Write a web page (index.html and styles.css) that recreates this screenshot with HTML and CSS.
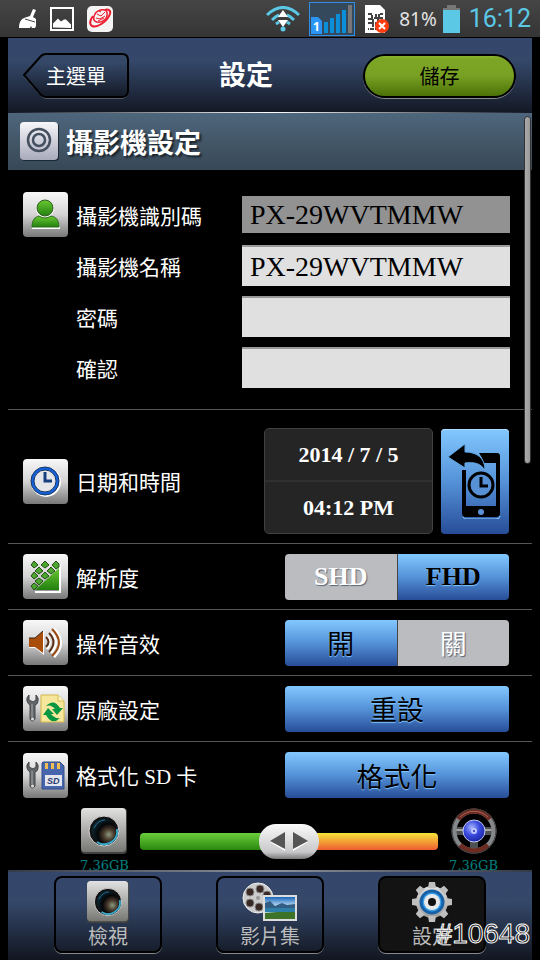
FILE: index.html
```
<!DOCTYPE html>
<html lang="zh-Hant">
<head>
<meta charset="UTF-8" />
<meta name="viewport" content="width=device-width, initial-scale=1.0" />
<title>設定</title>
<link rel="stylesheet" href="styles.css">
</head>
<body>

<div class="statusbar">
    <div class="status-group notices">
        <svg width="18" height="20" viewBox="0 0 18 20"><path d="M14 0l3 1-3 7 3 2v7l-1 2h-3l-1-2-1 2H0c0-7 3-10 8-11l3-1z" fill="#fff"/><path d="M6 10l10 3" stroke="#444" stroke-width="1"/></svg>
        <svg width="24" height="24" viewBox="0 0 24 24"><rect x="1" y="1" width="22" height="22" fill="none" stroke="#fff" stroke-width="2"/><path d="M3 20.500v-4l5-5 3 3 3-2 2 0 5 5v3.500z" fill="#fff"/></svg>
        <svg width="26" height="26" viewBox="0 0 26 26"><rect width="26" height="26" rx="5" fill="#f4f4f4"/><g fill="none" stroke="#ed1c2e"><path d="M6 10C3 14 2 18 5 20c5 2 15-4 18-12 1-4-2-5-5-4" stroke-width="2"/><path d="M8 8c3-5 12-6 12-1 1 5-4 10-10 9-4-1-4-4-2-8z" stroke-width="1.500"/><path d="M10 8l4 2 4-4M9 12l4 1 5-3M12 5l2 1M11 15l6-3" stroke-width="1"/></g></svg>
    </div>
    <div class="status-group network">
        <svg width="34" height="26" viewBox="0 0 34 26"><g fill="none" stroke="#5bc8e6" stroke-width="3"><path d="M1 9Q17-6 33 9"/><path d="M6 14Q10 10 13 9M28 14Q24 10 21 9"/><path d="M10 18l3-2M24 18l-3-2"/></g><path d="M17 4l5 7H12zM17 21l-5-7h10z" fill="#fff"/><circle cx="17" cy="23" r="2.500" fill="#5bc8e6"/></svg>
        <svg width="46" height="34" viewBox="0 0 46 34"><rect x=".5" y=".5" width="45" height="33" fill="#34495b" stroke="#2f8fe8"/><path d="M2 15h7l4 4v13H2z" fill="#2b95f5"/><text x="4" y="29" class="sim-number">1</text><path d="M15 20h4v11h-4zM21 16h4v15h-4zM27 12h4v19h-4zM33 8h4v23h-4z" fill="#0a8fd8"/><path d="M39 3h4v28h-4z" fill="#777"/></svg>
        <svg width="26" height="30" viewBox="0 0 26 30"><path d="M1 1h15l5 5v23H1z" fill="#fff"/><path d="M4 10h4v4h7v-4h4M4 15h5v4M19 14h-5v5M4 19h5v6H4M12 14v-4M12 18v8" fill="none" stroke="#444" stroke-width="2" stroke-dasharray="4 1"/><circle cx="18" cy="22" r="7" fill="#ff3d10"/><path d="M15 19l6 6M21 19l-6 6" stroke="#fff" stroke-width="2"/></svg>
        <div class="battery">
            <span>81%</span>
            <svg width="17" height="28" viewBox="0 0 17 28"><path d="M4 0h9v3h4v3H0V3h4z" fill="#777"/><path d="M0 5h17v23H0z" fill="#5bc8e6"/></svg>
        </div>
        <span class="clock">16:12</span>
    </div>
</div>

<div class="app">
    <header class="topbar">
        <button class="back-btn" type="button">
            <svg class="back-shape" width="106" height="46" viewBox="0 0 106 46">
                <defs><linearGradient id="bar" x2="0" y2="1"><stop offset=".2" stop-color="#354868"/><stop offset="1" stop-color="#131925"/></linearGradient></defs>
                <path d="M1 23L18 4Q20 2 23 2h76q6 0 6 6v31q0 6-6 6H23q-3 0-5-2z" fill="none" stroke="#8b8d93"/>
                <path d="M1 22L18 3Q20 1 23 1h76q6 0 6 6v31q0 6-6 6H23q-3 0-5-2z" fill="url(#bar)" stroke="#000" stroke-width="2"/>
            </svg>
            <span>主選單</span>
        </button>
        <h1>設定</h1>
        <button class="save-btn" type="button">儲存</button>
    </header>

    <main class="content">
        <div class="section-head">
            <svg width="39" height="39" viewBox="0 0 39 39"><defs><linearGradient id="silver" x2="0" y2="1"><stop offset="0" stop-color="#f7f7fa"/><stop offset="1" stop-color="#a9aabb"/></linearGradient></defs><rect x="1" y="1" width="38" height="38" rx="4" fill="#1d2933"/><rect width="38" height="38" rx="4" fill="url(#silver)"/><g fill="none" stroke="#44505f" stroke-width="3"><circle cx="19" cy="18" r="11" stroke-width="2.500"/><circle cx="19" cy="18" r="6" stroke-width="2.500"/></g></svg>
            <h2>攝影機設定</h2>
        </div>

        <form class="settings">
            <div class="camera-fields">
                <span class="tile"><svg width="45" height="45" viewBox="0 0 45 45"><defs><linearGradient id="green" x2="0" y2="1"><stop offset="0" stop-color="#69c832"/><stop offset="1" stop-color="#238010"/></linearGradient></defs><g transform="translate(0 1)" fill="#fff"><circle cx="22" cy="16" r="9"/><path d="M9 36c0-8 4-12 7-12q6 4 12 0c5 2 9 5 9 12z"/></g><circle cx="22" cy="16" r="8" fill="url(#green)" stroke="#315d23"/><path d="M9 35c0-7 3-10 7-11q6 4 12 0c5 1 8 4 8 11z" fill="url(#green)" stroke="#2a6b1a"/></svg></span>
                <label for="camId">攝影機識別碼</label>
                <input class="field readonly" id="camId" type="text" value="PX-29WVTMMW" readonly>
                <label for="camName">攝影機名稱</label>
                <input class="field" id="camName" type="text" value="PX-29WVTMMW">
                <label for="pass">密碼</label>
                <input class="field" id="pass" type="password">
                <label for="confirm">確認</label>
                <input class="field" id="confirm" type="password">
            </div>

            <div class="row date-row">
                <span class="tile"><svg width="45" height="45" viewBox="0 0 45 45"><circle cx="23" cy="23" r="14" fill="none" stroke="#fff" stroke-width="2"/><circle cx="22" cy="22" r="12.500" fill="#e4e6ea" stroke="#1263dc" stroke-width="3"/><circle cx="22" cy="22" r="14" fill="none" stroke="#193461"/><circle cx="22" cy="22" r="11" fill="none" stroke="#193461"/><path d="M22 13v9h7" fill="none" stroke="#163f80" stroke-width="3"/></svg></span>
                <span class="label">日期和時間</span>
                <div class="datetime">
                    <button type="button">2014 / 7 / 5</button>
                    <button type="button">04:12 PM</button>
                </div>
                <button class="blue sync-btn" type="button" aria-label="同步時間">
                    <svg width="54" height="76" viewBox="0 0 54 76">
                        <path d="M15 74q1 2 3 2h30q4 0 4-3" fill="none" stroke="#8fd0ff" stroke-width="1"/>
                        <path d="M31 10h18q3 0 3 3v57q0 4-4 4H18q-4 0-4-4V27h4v36h30V20H36q-2-6-5-10z" fill="#000"/>
                        <path d="M0 14L17 1v8c12 0 20 6 20 18-5-7-11-8-20-7v5z" fill="#000" stroke="#62a9e8" stroke-width="1"/>
                        <circle cx="33" cy="42" r="12" fill="#5790d5" stroke="#000" stroke-width="3"/>
                        <path d="M33 34v9h7" fill="none" stroke="#000" stroke-width="3"/>
                        <circle cx="33" cy="69" r="3" fill="#5d92d6"/>
                    </svg>
                </button>
            </div>

            <div class="row">
                <span class="tile"><svg width="45" height="45" viewBox="0 0 45 45"><path d="M37 10v28H12" fill="none" stroke="#fff" stroke-width="2"/><path d="M36 14v22H12z" fill="url(#green)"/><g fill="#4ba52f" stroke="#234f17" stroke-width="1"><path d="M11 7l4 4-4 3-3-3zM22 7l4 4-4 3-4-3zM33 7l3 3v3l-3 2-4-4zM16 13l4 4-4 3-4-3zM28 13l4 4-4 3-4-3zM11 18l4 4-4 3-3-3zM22 18l4 4-4 3-4-3zM16 24l4 3-4 4-4-4zM11 29l4 3-4 4-3-4z"/></g></svg></span>
                <span class="label">解析度</span>
                <div class="control toggle latin">
                    <button class="off" type="button">SHD</button>
                    <button class="blue" type="button">FHD</button>
                </div>
            </div>

            <div class="row">
                <span class="tile"><svg width="45" height="45" viewBox="0 0 45 45"><path d="M6 19h6l9-8v24l-9-7H6z" fill="#fff"/><path d="M6 18h6l8-7v22l-8-6H6z" fill="#a84d0a"/><path d="M6 18h6l8-7" fill="none" stroke="#3d2411"/><g fill="none" stroke="#fff" stroke-width="3"><path d="M24 17q5 5 0 12M28 13q9 9 0 20M31 9q13 14 0 28"/></g><g fill="none" stroke="#5b3015" stroke-width="2"><path d="M23 17q5 5 0 10M26 13q9 9 0 19"/><path d="M29 9q14 14 0 27" stroke="#9a480d"/></g></svg></span>
                <span class="label">操作音效</span>
                <div class="control toggle">
                    <button class="blue" type="button">開</button>
                    <button class="off" type="button">關</button>
                </div>
            </div>

            <div class="row">
                <span class="tile"><svg width="45" height="45" viewBox="0 0 45 45"><defs><g id="wrench"><path d="M6 9q-3 3-2 6 1 3 3 4v14q2 4 5 0V19q3-1 3-4 1-3-2-6v5l-3 2-4-2z" fill="#62676b" stroke="#444" stroke-width="1"/><path d="M9 18v13" stroke="#a5a9ab"/><circle cx="9.500" cy="33" r="1.500" fill="#ddd"/></g></defs><use href="#wrench"/><path d="M18 9h17l6 6v21H18z" fill="#f6e79c" stroke="#d5b94d"/><path d="M35 9v6h6" fill="#fff6cc" stroke="#d5b94d"/><g fill="#079641"><path d="M23 20q8-8 14 2l3 0-6 7-5-6 3 0q-4-5-9-3z"/><path d="M37 32q-8 8-14-3l-3 0 5-7 6 6-3 0q4 5 9 4z"/></g></svg></span>
                <span class="label">原廠設定</span>
                <button class="control blue" type="button">重設</button>
            </div>

            <div class="row last">
                <span class="tile"><svg width="45" height="45" viewBox="0 0 45 45"><use href="#wrench"/><path d="M20 9h17l4 4v23H19V10z" fill="#4766ae" stroke="#354c8a"/><path d="M22 10h3v6h-3zM28 10h3v6h-3zM34 10h3v6h-3z" fill="#f3bd50"/><rect x="22" y="22" width="17" height="11" fill="#e3e6ee"/><text x="24" y="31" class="sd-mark">SD</text></svg></span>
                <span class="label">格式化 SD 卡</span>
                <button class="control blue" type="button">格式化</button>
            </div>

            <div class="storage">
                <div class="storage-end">
                    <svg width="46" height="46" viewBox="0 0 46 46">
                        <defs>
                            <linearGradient id="body" x2="0" y2="1"><stop offset="0" stop-color="#e2e2e2"/><stop offset="1" stop-color="#777873"/></linearGradient>
                            <radialGradient id="lens" cx=".7" cy=".65" r=".75"><stop offset="0" stop-color="#8a9a80"/><stop offset=".3" stop-color="#4a3a2c"/><stop offset=".6" stop-color="#050608"/><stop offset="1" stop-color="#0c2c38"/></radialGradient>
                            <g id="camera"><rect width="46" height="46" rx="4" fill="#41423f"/><rect width="45" height="44" rx="4" fill="url(#body)"/><circle cx="23" cy="23" r="15" fill="#111" stroke="#d5d5d5"/><circle cx="23" cy="23" r="12" fill="url(#lens)"/><path d="M16 34a13 13 0 0 0 20-13" fill="none" stroke="#3aa9ca" stroke-width="2"/><path d="M13 20q4-8 11-8" fill="none" stroke="#216a95" stroke-width="1"/></g>
                        </defs>
                        <use href="#camera"/>
                    </svg>
                    <span>7.36GB</span>
                </div>
                <input class="split" type="range" min="0" max="100" value="50" aria-label="儲存空間分配">
                <div class="storage-end">
                    <svg width="46" height="46" viewBox="0 0 46 46">
                        <defs><radialGradient id="hub" cx=".4" cy=".35" r=".7"><stop offset="0" stop-color="#a7b6ff"/><stop offset=".5" stop-color="#3949dc"/><stop offset="1" stop-color="#1721a0"/></radialGradient></defs>
                        <path d="M4 23h38M23 23v18" stroke="#4e5052" stroke-width="8"/>
                        <path d="M4 22h38" stroke="#a1a3a4" stroke-width="2"/>
                        <g fill="none" stroke-width="5"><circle cx="23" cy="23" r="20" stroke="#85888a"/><path d="M7 11a20 20 0 0 1 32 0M9 37a20 20 0 0 0 28 0" stroke="#6e2b22"/></g>
                        <circle cx="23" cy="23" r="22" fill="none" stroke="#3c3938"/>
                        <path d="M9 9a20 20 0 0 1 28 0" fill="none" stroke="#aa6255"/>
                        <circle cx="23" cy="23" r="11" fill="url(#hub)" stroke="#c3c9ef"/><circle cx="23" cy="23" r="3" fill="#bec8ff"/><circle cx="23" cy="23" r="1" fill="#2632a5"/>
                    </svg>
                    <span>7.36GB</span>
                </div>
            </div>
        </form>
        <div class="scrollbar"></div>
    </main>

    <nav class="tabbar">
        <button class="tab" type="button">
            <svg width="42" height="42" viewBox="0 0 46 46"><use href="#camera"/></svg>
            <span>檢視</span>
        </button>
        <button class="tab" type="button">
            <svg width="56" height="42" viewBox="0 0 56 42">
                <defs><linearGradient id="sky" x2="0" y2="1"><stop offset="0" stop-color="#1865bb"/><stop offset=".4" stop-color="#bcdcf2"/></linearGradient></defs>
                <circle cx="16" cy="17" r="15" fill="#ccc" stroke="#eee"/>
                <g fill="#382925" stroke="#888"><circle cx="18" cy="8" r="4"/><circle cx="8" cy="11" r="4"/><circle cx="8" cy="22" r="4"/><circle cx="17" cy="26" r="4"/><circle cx="25" cy="14" r="4"/></g>
                <circle cx="16" cy="17" r="2" fill="#999"/>
                <rect x="21" y="14" width="34" height="26" fill="#ddd"/>
                <path d="M23 16h30v22H23z" fill="url(#sky)"/><path d="M23 22l5-2 5 5 7-3 5 2 8-1v6H23z" fill="#335e83"/><path d="M23 27h30v4H23z" fill="#2d7fa9"/><path d="M23 32l12-1 18 0v7H23z" fill="#3c7328"/>
            </svg>
            <span>影片集</span>
        </button>
        <button class="tab active" type="button">
            <svg width="42" height="42" viewBox="0 0 42 42">
                <defs><linearGradient id="steel" x2="0" y2="1"><stop offset="0" stop-color="#e0e0e0"/><stop offset="1" stop-color="#9c9c9c"/></linearGradient></defs>
                <g fill="#bfbfbf"><circle cx="21" cy="21" r="16" fill="url(#steel)"/><path id="teeth" d="M18 1h6l1 6h-8zM18 41h6l1-6h-8zM1 18v6l6 1v-8zM41 18v6l-6 1v-8z"/><use href="#teeth" transform="rotate(45 21 21)"/></g>
                <circle cx="21" cy="21" r="11" fill="#3aa0ec" stroke="#1760a5" stroke-width="3"/><circle cx="21" cy="21" r="8" fill="#e9e9e9"/><circle cx="21" cy="21" r="4" fill="#111"/>
            </svg>
            <span>設定</span>
        </button>
    </nav>
</div>

<div class="stamp">#10648</div>

</body>
</html>
```
FILE: styles.css
```
* {
    box-sizing: border-box;
}
body {
    margin: 0;
    height: 100vh;
    display: flex;
    flex-direction: column;
    position: relative;
    background: #000;
    color: #fff;
    font-family: "Liberation Serif", "Noto Sans CJK TC", serif;
    font-size: 21px;
    overflow: hidden;
}
button {
    border: 0;
    padding: 0;
    background: none;
    color: inherit;
    font: inherit;
    cursor: pointer;
}
h1, h2 {
    margin: 0;
    font-size: 27px;
    line-height: 36px;
    font-weight: bold;
}
svg {
    display: block;
    flex-shrink: 0;
}

/* phone status bar */
.statusbar {
    height: 37px;
    display: flex;
    justify-content: space-between;
    padding: 0 9px 0 19px;
    background: linear-gradient(#454545, #353535);
    font-family: Roboto, sans-serif;
}
.status-group {
    display: flex;
    align-items: center;
    gap: 9px;
}
.notices {
    gap: 13px;
}
.battery {
    display: flex;
    align-items: center;
    gap: 6px;
    font-family: "Noto Sans", sans-serif;
    font-size: 19px;
    color: #e4e4e4;
}
.clock {
    font-size: 25px;
    color: #5bc8e6;
}
.sim-number {
    font: bold 12px "Noto Sans", sans-serif;
    fill: #fff;
}

.app {
    flex: 1;
    min-height: 0;
    display: flex;
    flex-direction: column;
    padding: 1px 8px 0;
}

/* header */
.topbar {
    height: 75px;
    display: flex;
    justify-content: space-between;
    align-items: center;
    padding: 0 16px 0 15px;
    background:
        linear-gradient(90deg, transparent, #fff 50%, transparent) bottom / 100% 1px no-repeat,
        linear-gradient(#34466a 0, #35486a 30%, #131824 100%);
}
.back-btn {
    display: grid;
    align-items: center;
    font-size: 20px;
}
.back-btn > * {
    grid-area: 1 / 1;
}
.save-btn {
    width: 153px;
    height: 44px;
    border: 2px solid #000;
    border-radius: 22px;
    background: linear-gradient(#8ab52f 0, #7da525 8%, #78a023 50%, #4b7207 100%);
    box-shadow: 0 1px 0 #8b8d93;
    color: #000;
    font-size: 20px;
}

/* scrolling area */
.content {
    flex: 1;
    min-height: 0;
    position: relative;
    overflow: hidden;
}
.section-head {
    height: 57px;
    display: flex;
    align-items: center;
    gap: 7px;
    padding-left: 12px;
    background: linear-gradient(#4e667c, #384856);
    text-shadow: 2px 2px 2px #1a232b;
}
.section-head h2 {
    padding-top: 4px;
}
.scrollbar {
    position: absolute;
    top: 3px;
    right: 1px;
    width: 7px;
    height: 348px;
    border: 1px solid #333;
    border-radius: 4px;
    background: linear-gradient(90deg, #aaa, #999);
}

.camera-fields {
    display: grid;
    grid-template-columns: 45px 1fr minmax(0, 268px);
    grid-auto-rows: 45px;
    column-gap: 8px;
    row-gap: 6px;
    align-items: center;
    padding: 22px 22px 19px 15px;
    border-bottom: 1px solid #555;
}
.camera-fields label {
    grid-column: 2;
}
.camera-fields .tile {
    grid-column: 1;
    grid-row: 1;
}
.field {
    grid-column: 3;
    width: 100%;
    height: 41px;
    border: 0;
    border-top: 2px solid #999;
    border-radius: 0;
    padding: 0 8px;
    background: #e0e0e0;
    color: #000;
    font-family: "Liberation Serif", serif;
    font-size: 28px;
}
.field.readonly {
    height: 37px;
    border-top: 0;
    background: #929292;
}

.tile {
    width: 45px;
    height: 45px;
    flex-shrink: 0;
    border-radius: 4px;
    background: linear-gradient(#f8f8f8, #d4d4d4 50%, #777);
}

.row {
    height: 66px;
    display: flex;
    align-items: center;
    gap: 8px;
    padding: 0 23px 0 15px;
    border-bottom: 1px solid #555;
}
.row.last {
    border-bottom: 0;
}
.date-row {
    height: 134px;
    padding-top: 9px;
}
.label {
    flex: 1;
}
.datetime {
    width: 169px;
    height: 106px;
    display: flex;
    flex-direction: column;
    border: 1px solid #404040;
    border-radius: 5px;
    background: #252525;
}
.datetime button {
    flex: 1;
    font-size: 22px;
    font-weight: bold;
}
.datetime button + button {
    border-top: 2px solid #303030;
}
.blue {
    border-radius: 4px;
    background: linear-gradient(#82c8ff, #5592d8 50%, #274d98);
    color: #000;
    text-shadow: 0 1px 1px #82c8ff;
}
.sync-btn {
    width: 68px;
    height: 105px;
    display: flex;
    align-items: center;
    justify-content: center;
    box-shadow: inset 0 1px 0 #b0dcff;
}
.control {
    width: 224px;
    height: 46px;
    font-size: 27px;
}
.toggle {
    display: flex;
}
.toggle button {
    flex: 1;
}
.toggle button:first-child {
    border-radius: 4px 0 0 4px;
    border-right: 1px solid #444;
}
.toggle button:last-child {
    border-radius: 0 4px 4px 0;
}
.toggle .off {
    background: #bbbcbf;
    color: #fff;
    text-shadow: 1px 1px 1px #566578;
}
.latin {
    font-size: 26px;
    font-weight: bold;
}
.sd-mark {
    font: italic bold 9px "Liberation Sans", sans-serif;
    fill: #273a70;
}

/* storage split slider */
.storage {
    display: flex;
    align-items: flex-start;
    gap: 11px;
    padding: 0 34px 0 72px;
}
.storage-end {
    display: flex;
    flex-direction: column;
    align-items: center;
    gap: 4px;
    color: #008080;
    font: 13px "DejaVu Serif", serif;
}
.split {
    -webkit-appearance: none;
    appearance: none;
    flex: 1;
    min-width: 0;
    height: 36px;
    margin: 15px 0 0;
    background: none;
}
.split::-webkit-slider-runnable-track {
    height: 17px;
    border-radius: 4px;
    background:
        linear-gradient(#6bce3b, #2a860e) left / 50% 100% no-repeat,
        linear-gradient(#f7e53a, #ef5c30) right / 50% 100% no-repeat;
}
.split::-webkit-slider-thumb {
    -webkit-appearance: none;
    width: 60px;
    height: 35px;
    margin-top: -9px;
    border-radius: 17px;
    background:
        url("data:image/svg+xml,%3Csvg xmlns='http://www.w3.org/2000/svg' width='38' height='20'%3E%3Cpath d='M0 11L15 2v18zM38 11L23 2v18z' fill='%23fff'/%3E%3Cpath d='M0 10L15 1v17zM38 10L23 1v17z' fill='%23555'/%3E%3C/svg%3E") center no-repeat,
        linear-gradient(#fafafa, #c8c8ca 80%, #77797b);
}

/* bottom tabs */
.tabbar {
    height: 90px;
    display: flex;
    justify-content: space-between;
    padding: 6px 46px;
    background:
        linear-gradient(90deg, #333a48, #8d919c 50%, #333a48) top / 100% 2px no-repeat,
        linear-gradient(#34466a 0, #35486a 35%, #111620 100%);
}
.tab {
    width: 108px;
    height: 77px;
    display: flex;
    flex-direction: column;
    align-items: center;
    padding-top: 3px;
    border: 2px solid #000;
    border-radius: 8px;
    box-shadow: 0 1px 0 #85878c;
    color: #bbb;
    font-size: 20px;
    line-height: 28px;
}
.tab.active {
    background: #131313;
}

.stamp {
    position: absolute;
    right: 10px;
    bottom: 10px;
    color: #111;
    font: 28px/32px "Liberation Sans", sans-serif;
    -webkit-text-stroke: 1px #fff;
}
```
